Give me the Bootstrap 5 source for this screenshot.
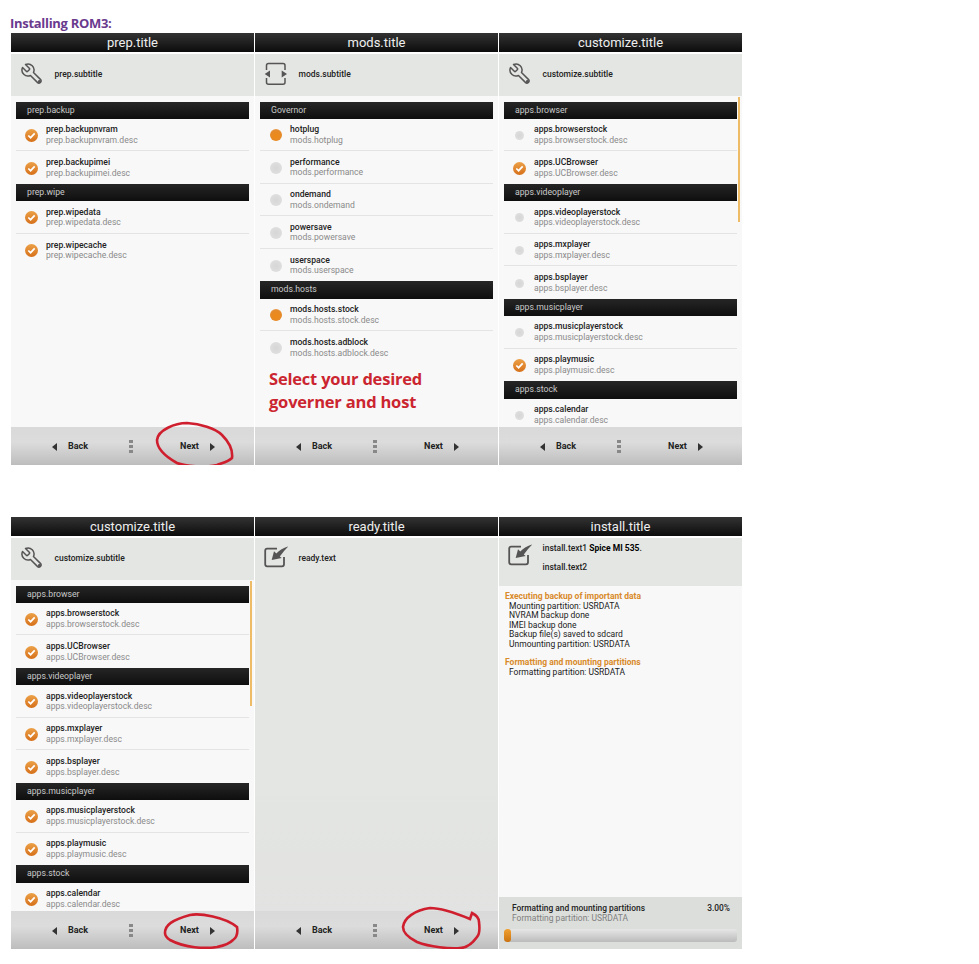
<!DOCTYPE html>
<html lang="en"><head><meta charset="utf-8"><title>Installing ROM3</title>
<link href="https://cdn.jsdelivr.net/npm/bootstrap@5.3.0/dist/css/bootstrap.min.css" rel="stylesheet">
<style>
body{background:#fff;font-family:Roboto,sans-serif;overflow:hidden}
.sheet{padding:14px 0 0 11px}
.sheet-head{margin:0 0 0 -1px;font:700 13px/19px "Open Sans",sans-serif;color:#6a3a8e;letter-spacing:-.3px}
.wall{grid-template-columns:repeat(3,243px);column-gap:1px;row-gap:52px;grid-auto-rows:432px}
.phone{position:relative;overflow:hidden;background:#f8f8f8}
.ttl{height:19px;flex:none;background:linear-gradient(#333,#0c0c0c);color:#eee;font-size:13px;line-height:19px;text-align:center}
.sub{flex:none;height:44px;border-top:2px solid #fff;background:#e4e6e3;padding:0 0 2px 9px;color:#222;font-size:8.5px;font-weight:500}
.sub svg{width:24px;height:24px;margin-right:10.5px;flex:none}
.scroller{flex:1 1 0;min-height:0;overflow:hidden;padding:5.5px 5px 0;position:relative}
.grp{height:17.4px;background:linear-gradient(#262626,#0e0e0e);color:#c9c9c9;font-size:8.7px;line-height:17px;padding-left:11px}
.row-item{height:32.5px;border-bottom:1px solid #e4e4e4;padding:1px 0 0 7px}
.row-item.end{border-bottom:0}
.mark-box{width:17px;flex:none;margin-right:6px;display:flex;justify-content:center}
.tick{width:15px;height:15px;display:block}
.dot-off,.dot-on{display:block;border-radius:50%}
.dot-off{width:12px;height:12px;background:radial-gradient(#d6d6d6,#dedede 70%,#eaeaea)}
.dot-off.tiny{width:9px;height:9px}
.dot-on{width:12px;height:12px;background:radial-gradient(circle at 50% 60%,#ee8a16,#e58a2a 60%,#e8b27c)}
.nm{font-size:8.6px;line-height:9.5px;color:#222;font-weight:500}
.ds{font-size:8.6px;line-height:10.5px;color:#8a8a8a}
.note{font:700 16.5px/23px "Open Sans",sans-serif;color:#cb2530;margin:3.5px 0 0 9px;letter-spacing:-.2px}
.sbar{position:absolute;top:64px;right:2px;width:2px;height:125px;background:#eebb66}
.foot{flex:none;height:38px;background:linear-gradient(#d9d9d9,#dcdcdc 40%,#bdbdbd);padding:1px 0 0 41px;font-size:9px;font-weight:700;color:#222}
.tri-l,.tri-r{width:0;height:0;border-top:4.5px solid transparent;border-bottom:4.5px solid transparent}
.tri-l{border-right:5px solid #333;margin-right:11px}
.tri-r{border-left:5px solid #333;margin-left:11px}
.dots{margin:0 47px 0 41px;width:4px;height:13px;background:repeating-linear-gradient(#888 0 3px,transparent 3px 5px)}
.plain{background:linear-gradient(#e4e6e3,#e4e6e3 60%,#e1e2e1)}
.plain .sub{background:transparent}
.plain .scroller{padding:0}
.inst{height:50px;align-items:flex-start!important;padding-top:6px}
.inst b{font-weight:700;color:#000}
.inst p{margin:0 0 9.5px;line-height:9.5px}
.log{flex:1 1 0;padding:6px 6px;font-size:8.5px;line-height:9.5px;color:#222}
.log h6{margin:0;font-size:8.5px;line-height:9.5px;font-weight:700;color:#d98a2a}
.log p{margin:0 0 9px 4px}
.pfoot{flex:none;height:52px;background:#dcdedb;padding:6px 12px 0 13px;font-size:8.4px;line-height:10px;color:#222;font-weight:500;position:relative}
.pfoot small{display:block;font-size:8.5px;color:#808080;font-weight:400}
.bar-track{position:absolute;left:5px;right:5px;top:32px;height:13px;border-radius:3px;background:linear-gradient(#e6e6e6,#bbb)}
.bar-track .progress-bar{background:linear-gradient(#f0a030,#cc7410);border-radius:3px}
.ink{position:absolute;inset:0;width:243px;height:432px;pointer-events:none}
.ink path{fill:none;stroke:#cf1f2e;stroke-width:2.6}
</style></head><body>
<svg width="0" height="0" class="d-block" aria-hidden="true"><defs>
<symbol id="i-wrench" viewBox="0 0 24 24"><g transform="translate(24 0) scale(-1 1)" fill="none" stroke="#555" stroke-width="1.5" stroke-linejoin="round"><path d="M14.7 6.3a1 1 0 0 0 0 1.4l1.6 1.6a1 1 0 0 0 1.4 0l3.77-3.77a6 6 0 0 1-7.94 7.94l-6.91 6.91a2.12 2.12 0 0 1-3-3l6.91-6.91a6 6 0 0 1 7.94-7.94l-3.76 3.76z"/><circle cx="4.6" cy="19.4" r=".7"/></g></symbol>
<symbol id="i-rom" viewBox="0 0 24 24"><path d="M2.5 8V3.5Q2.5 1.5 4.5 1.5H19Q21 1.5 21 3.5V8M2.5 16V20.3Q2.5 22.3 4.5 22.3H19Q21 22.3 21 20.3V16" fill="none" stroke="#555" stroke-width="1.5"/><path d="M.7 12 6 8.5V15.5ZM23 12 17.7 8.5V15.5Z" fill="#555"/></symbol>
<symbol id="i-export" viewBox="0 0 24 24"><path d="M20 11V18.3Q20 20.3 18 20.3H3.2Q1.2 20.3 1.2 18.3V4.7Q1.2 2.7 3.2 2.7H13" fill="none" stroke="#555" stroke-width="1.8"/><path d="M7.7 14 10 5.3 12.3 7.6Q17 2.5 24.2.5 20.5 4 15.8 10.5L17.7 12Z" fill="#555"/></symbol>
<symbol id="i-tick" viewBox="0 0 15 15"><defs><linearGradient id="tg" x1="0" y1="0" x2="0" y2="1"><stop offset="0" stop-color="#eca148"/><stop offset="1" stop-color="#d6701a"/></linearGradient></defs><circle cx="7.5" cy="7.5" r="6.5" fill="url(#tg)"/><path d="M4.3 7.5 6.6 9.7 10.7 5.4" fill="none" stroke="#fff" stroke-width="1.7"/></symbol>
</defs></svg>
<main class="sheet">
<h1 class="sheet-head">Installing ROM3:</h1>
<div class="wall d-grid">

<section class="phone d-flex flex-column">
<div class="ttl">prep.title</div>
<div class="sub d-flex align-items-center"><svg><use href="#i-wrench"/></svg>prep.subtitle</div>
<div class="scroller">
<div class="grp">prep.backup</div>
<div class="row-item d-flex align-items-center"><span class="mark-box"><svg class="tick"><use href="#i-tick"/></svg></span><div><div class="nm">prep.backupnvram</div><div class="ds">prep.backupnvram.desc</div></div></div>
<div class="row-item end d-flex align-items-center"><span class="mark-box"><svg class="tick"><use href="#i-tick"/></svg></span><div><div class="nm">prep.backupimei</div><div class="ds">prep.backupimei.desc</div></div></div>
<div class="grp">prep.wipe</div>
<div class="row-item d-flex align-items-center"><span class="mark-box"><svg class="tick"><use href="#i-tick"/></svg></span><div><div class="nm">prep.wipedata</div><div class="ds">prep.wipedata.desc</div></div></div>
<div class="row-item end d-flex align-items-center"><span class="mark-box"><svg class="tick"><use href="#i-tick"/></svg></span><div><div class="nm">prep.wipecache</div><div class="ds">prep.wipecache.desc</div></div></div>
</div>
<div class="foot d-flex align-items-center"><i class="tri-l"></i>Back<i class="dots"></i>Next<i class="tri-r"></i></div>
<svg class="ink" viewBox="11 33 243 432"><path d="M157 440C158 430 175 423 187 423C200 424 215 428 222 435C229 442 233 450 232 458C228 462 222 463 217 465C205 468 185 466 177 463C168 458 157 450 157 440Z"/></svg>
</section>

<section class="phone d-flex flex-column">
<div class="ttl">mods.title</div>
<div class="sub d-flex align-items-center"><svg><use href="#i-rom"/></svg>mods.subtitle</div>
<div class="scroller">
<div class="grp">Governor</div>
<div class="row-item d-flex align-items-center"><span class="mark-box"><i class="dot-on"></i></span><div><div class="nm">hotplug</div><div class="ds">mods.hotplug</div></div></div>
<div class="row-item d-flex align-items-center"><span class="mark-box"><i class="dot-off"></i></span><div><div class="nm">performance</div><div class="ds">mods.performance</div></div></div>
<div class="row-item d-flex align-items-center"><span class="mark-box"><i class="dot-off"></i></span><div><div class="nm">ondemand</div><div class="ds">mods.ondemand</div></div></div>
<div class="row-item d-flex align-items-center"><span class="mark-box"><i class="dot-off"></i></span><div><div class="nm">powersave</div><div class="ds">mods.powersave</div></div></div>
<div class="row-item end d-flex align-items-center"><span class="mark-box"><i class="dot-off"></i></span><div><div class="nm">userspace</div><div class="ds">mods.userspace</div></div></div>
<div class="grp">mods.hosts</div>
<div class="row-item d-flex align-items-center"><span class="mark-box"><i class="dot-on"></i></span><div><div class="nm">mods.hosts.stock</div><div class="ds">mods.hosts.stock.desc</div></div></div>
<div class="row-item end d-flex align-items-center"><span class="mark-box"><i class="dot-off"></i></span><div><div class="nm">mods.hosts.adblock</div><div class="ds">mods.hosts.adblock.desc</div></div></div>
<p class="note">Select your desired<br>governer and host</p>
</div>
<div class="foot d-flex align-items-center"><i class="tri-l"></i>Back<i class="dots"></i>Next<i class="tri-r"></i></div>
</section>

<section class="phone d-flex flex-column">
<div class="ttl">customize.title</div>
<div class="sub d-flex align-items-center"><svg><use href="#i-wrench"/></svg>customize.subtitle</div>
<div class="scroller">
<div class="grp">apps.browser</div>
<div class="row-item d-flex align-items-center"><span class="mark-box"><i class="dot-off tiny"></i></span><div><div class="nm">apps.browserstock</div><div class="ds">apps.browserstock.desc</div></div></div>
<div class="row-item end d-flex align-items-center"><span class="mark-box"><svg class="tick"><use href="#i-tick"/></svg></span><div><div class="nm">apps.UCBrowser</div><div class="ds">apps.UCBrowser.desc</div></div></div>
<div class="grp">apps.videoplayer</div>
<div class="row-item d-flex align-items-center"><span class="mark-box"><i class="dot-off tiny"></i></span><div><div class="nm">apps.videoplayerstock</div><div class="ds">apps.videoplayerstock.desc</div></div></div>
<div class="row-item d-flex align-items-center"><span class="mark-box"><i class="dot-off tiny"></i></span><div><div class="nm">apps.mxplayer</div><div class="ds">apps.mxplayer.desc</div></div></div>
<div class="row-item end d-flex align-items-center"><span class="mark-box"><i class="dot-off tiny"></i></span><div><div class="nm">apps.bsplayer</div><div class="ds">apps.bsplayer.desc</div></div></div>
<div class="grp">apps.musicplayer</div>
<div class="row-item d-flex align-items-center"><span class="mark-box"><i class="dot-off tiny"></i></span><div><div class="nm">apps.musicplayerstock</div><div class="ds">apps.musicplayerstock.desc</div></div></div>
<div class="row-item end d-flex align-items-center"><span class="mark-box"><svg class="tick"><use href="#i-tick"/></svg></span><div><div class="nm">apps.playmusic</div><div class="ds">apps.playmusic.desc</div></div></div>
<div class="grp">apps.stock</div>
<div class="row-item end d-flex align-items-center"><span class="mark-box"><i class="dot-off tiny"></i></span><div><div class="nm">apps.calendar</div><div class="ds">apps.calendar.desc</div></div></div>
</div>
<div class="foot d-flex align-items-center"><i class="tri-l"></i>Back<i class="dots"></i>Next<i class="tri-r"></i></div>
<i class="sbar"></i>
</section>

<section class="phone d-flex flex-column">
<div class="ttl">customize.title</div>
<div class="sub d-flex align-items-center"><svg><use href="#i-wrench"/></svg>customize.subtitle</div>
<div class="scroller">
<div class="grp">apps.browser</div>
<div class="row-item d-flex align-items-center"><span class="mark-box"><svg class="tick"><use href="#i-tick"/></svg></span><div><div class="nm">apps.browserstock</div><div class="ds">apps.browserstock.desc</div></div></div>
<div class="row-item end d-flex align-items-center"><span class="mark-box"><svg class="tick"><use href="#i-tick"/></svg></span><div><div class="nm">apps.UCBrowser</div><div class="ds">apps.UCBrowser.desc</div></div></div>
<div class="grp">apps.videoplayer</div>
<div class="row-item d-flex align-items-center"><span class="mark-box"><svg class="tick"><use href="#i-tick"/></svg></span><div><div class="nm">apps.videoplayerstock</div><div class="ds">apps.videoplayerstock.desc</div></div></div>
<div class="row-item d-flex align-items-center"><span class="mark-box"><svg class="tick"><use href="#i-tick"/></svg></span><div><div class="nm">apps.mxplayer</div><div class="ds">apps.mxplayer.desc</div></div></div>
<div class="row-item end d-flex align-items-center"><span class="mark-box"><svg class="tick"><use href="#i-tick"/></svg></span><div><div class="nm">apps.bsplayer</div><div class="ds">apps.bsplayer.desc</div></div></div>
<div class="grp">apps.musicplayer</div>
<div class="row-item d-flex align-items-center"><span class="mark-box"><svg class="tick"><use href="#i-tick"/></svg></span><div><div class="nm">apps.musicplayerstock</div><div class="ds">apps.musicplayerstock.desc</div></div></div>
<div class="row-item end d-flex align-items-center"><span class="mark-box"><svg class="tick"><use href="#i-tick"/></svg></span><div><div class="nm">apps.playmusic</div><div class="ds">apps.playmusic.desc</div></div></div>
<div class="grp">apps.stock</div>
<div class="row-item end d-flex align-items-center"><span class="mark-box"><svg class="tick"><use href="#i-tick"/></svg></span><div><div class="nm">apps.calendar</div><div class="ds">apps.calendar.desc</div></div></div>
</div>
<div class="foot d-flex align-items-center"><i class="tri-l"></i>Back<i class="dots"></i>Next<i class="tri-r"></i></div>
<i class="sbar"></i>
<svg class="ink" viewBox="11 517 243 432"><path d="M165 933C165 925 172 920 190 915C200 913 225 917 237 927C238 933 236 938 233 940C228 945 222 946 217 947C205 949 185 948 170 940C167 938 165 936 165 933Z"/></svg>
</section>

<section class="phone plain d-flex flex-column">
<div class="ttl">ready.title</div>
<div class="sub d-flex align-items-center"><svg><use href="#i-export"/></svg>ready.text</div>
<div class="scroller"></div>
<div class="foot d-flex align-items-center"><i class="tri-l"></i>Back<i class="dots"></i>Next<i class="tri-r"></i></div>
<svg class="ink" viewBox="255 517 243 432"><path d="M403 927C404 918 415 910 430 908C440 908 458 914 470 919L472 913C476 915 479 918 479 922C480 930 479 935 477 937C472 944 466 948 460 948C450 949 430 947 417 942C411 939 403 934 403 927Z"/></svg>
</section>

<section class="phone d-flex flex-column">
<div class="ttl">install.title</div>
<div class="sub inst d-flex"><svg><use href="#i-export"/></svg><div><p>install.text1 <b>Spice MI 535</b>.</p><p>install.text2</p></div></div>
<div class="log">
<h6>Executing backup of important data</h6>
<p>Mounting partition: USRDATA<br>NVRAM backup done<br>IMEI backup done<br>Backup file(s) saved to sdcard<br>Unmounting partition: USRDATA</p>
<h6>Formatting and mounting partitions</h6>
<p>Formatting partition: USRDATA</p>
</div>
<div class="pfoot">
<div class="d-flex justify-content-between"><span>Formatting and mounting partitions</span><span>3.00%</span></div>
<small>Formatting partition: USRDATA</small>
<div class="progress bar-track"><div class="progress-bar" style="width:3%"></div></div>
</div>
</section>

</div>
</main>
</body></html>
